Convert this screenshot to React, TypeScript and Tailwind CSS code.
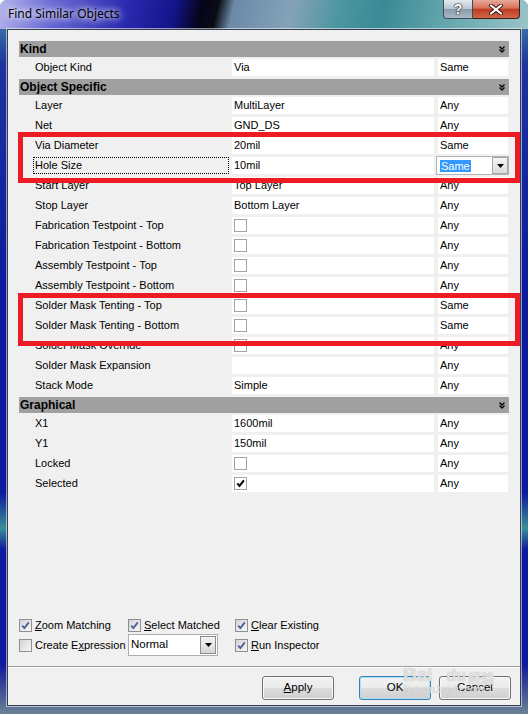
const sans = "font-['Liberation_Sans',Arial,sans-serif]";

type Val = string | { check: boolean };
type Row = { label: string; value: Val; match: string; focus?: boolean; combo?: boolean };

const sections: { title: string; rows: Row[] }[] = [
  { title: "Kind", rows: [{ label: "Object Kind", value: "Via", match: "Same" }] },
  {
    title: "Object Specific",
    rows: [
      { label: "Layer", value: "MultiLayer", match: "Any" },
      { label: "Net", value: "GND_DS", match: "Any" },
      { label: "Via Diameter", value: "20mil", match: "Same" },
      { label: "Hole Size", value: "10mil", match: "Same", focus: true, combo: true },
      { label: "Start Layer", value: "Top Layer", match: "Any" },
      { label: "Stop Layer", value: "Bottom Layer", match: "Any" },
      { label: "Fabrication Testpoint - Top", value: { check: false }, match: "Any" },
      { label: "Fabrication Testpoint - Bottom", value: { check: false }, match: "Any" },
      { label: "Assembly Testpoint - Top", value: { check: false }, match: "Any" },
      { label: "Assembly Testpoint - Bottom", value: { check: false }, match: "Any" },
      { label: "Solder Mask Tenting - Top", value: { check: false }, match: "Same" },
      { label: "Solder Mask Tenting - Bottom", value: { check: false }, match: "Same" },
      { label: "Solder Mask Override", value: { check: false }, match: "Any" },
      { label: "Solder Mask Expansion", value: "", match: "Any" },
      { label: "Stack Mode", value: "Simple", match: "Any" },
    ],
  },
  {
    title: "Graphical",
    rows: [
      { label: "X1", value: "1600mil", match: "Any" },
      { label: "Y1", value: "150mil", match: "Any" },
      { label: "Locked", value: { check: false }, match: "Any" },
      { label: "Selected", value: { check: true }, match: "Any" },
    ],
  },
];

const Chevrons = () => (
  <svg width="6" height="7" viewBox="0 0 6 7">
    <path d="M0.5 0.5 L3 3 L5.5 0.5 M0.5 3.5 L3 6 L5.5 3.5" stroke="#000" strokeWidth="1.3" fill="none" />
  </svg>
);

const DownTri = () => (
  <svg width="7" height="4" viewBox="0 0 7 4">
    <path d="M0 0h7L3.5 4z" fill="#000" />
  </svg>
);

const CellCheck = ({ on }: { on: boolean }) => (
  <span className="mt-[2px] flex h-[13px] w-[13px] items-center justify-center border border-[#a3a3a3] bg-white">
    {on && (
      <svg width="9" height="9" viewBox="0 0 9 9">
        <path d="M1.3 4.3 L3.5 6.9 L7.9 1.4" stroke="#000" strokeWidth="2" fill="none" />
      </svg>
    )}
  </span>
);

const GridRow = ({ r }: { r: Row }) => (
  <div className="flex h-[17px] text-[11px] leading-[17px] text-black">
    {r.focus ? (
      <div className="w-[213px] shrink-0 pl-[14px] pr-[3px]">
        <div className="h-full border border-dotted border-black pl-[1px] leading-[15px]">{r.label}</div>
      </div>
    ) : (
      <div className="w-[213px] shrink-0 pl-[16px] whitespace-nowrap">{r.label}</div>
    )}
    <div className="w-[202px] shrink-0 overflow-hidden bg-white pl-[2px] whitespace-nowrap">
      {typeof r.value === "string" ? r.value : <CellCheck on={r.value.check} />}
    </div>
    {r.combo ? (
      <div className="-mt-[1px] ml-[2px] flex h-[19px] w-[73px] shrink-0 items-center border border-[#b4b4b4] bg-white">
        <span className="ml-[3px] h-[12px] bg-[#3399ff] px-[1px] leading-[12px] text-white">{r.match}</span>
        <span className="ml-auto flex h-[17px] w-[16px] items-center justify-center border border-[#a6a6a6] bg-[linear-gradient(180deg,#f4f4f4,#dcdcdc)]">
          <DownTri />
        </span>
      </div>
    ) : (
      <div className="ml-[4px] w-[70px] shrink-0 bg-white pl-[2px]">{r.match}</div>
    )}
  </div>
);

const WinCheck = ({ on }: { on: boolean }) => (
  <span className="flex h-[13px] w-[13px] shrink-0 items-center justify-center border border-[#8e8f8f] bg-white">
    <span className="flex h-[11px] w-[11px] items-center justify-center bg-[linear-gradient(135deg,#d2d4d8,#f6f6f6)]">
      {on && (
        <svg width="9" height="9" viewBox="0 0 9 9">
          <path d="M1.2 4.6 L3.4 7 L7.8 1.4" stroke="#4a5f97" strokeWidth="1.8" fill="none" />
        </svg>
      )}
    </span>
  </span>
);

const Opt = ({ on, children }: { on: boolean; children: React.ReactNode }) => (
  <div className="flex items-center">
    <WinCheck on={on} />
    <span className="ml-[3px] whitespace-nowrap text-[11px] text-black">{children}</span>
  </div>
);

const Btn = ({ children, def }: { children: React.ReactNode; def?: boolean }) => (
  <div
    className={
      "flex h-[24px] w-[72px] items-center justify-center rounded-[3px] border text-[11.5px] text-black bg-[linear-gradient(180deg,#f2f2f2_0%,#ebebeb_50%,#dddddd_51%,#cfcfcf_100%)] " +
      (def
        ? "border-[#3c7fb1] shadow-[inset_0_0_0_1px_#a8e4f8]"
        : "border-[#707070] shadow-[inset_0_0_0_1px_#fafafa]")
    }
  >
    {children}
  </div>
);

export default function App() {
  return (
    <div className={"relative flex h-[714px] w-[528px] flex-col overflow-hidden rounded-t-[7px] bg-[linear-gradient(180deg,#4a98a6_0%,#1c34a0_9%,#0e1a9c_40%,#0e1a9c_69%,#3a8e98_74%,#0e1a9c_77%,#0e1a9c_93%,#6c8294_100%)] " + sans}>
      {/* title bar */}
      <div className="flex h-[29px] shrink-0 items-start bg-[linear-gradient(103deg,#b4b4ec_0%,#6a6ad4_10%,#2a2ab0_24%,#14148a_33%,#05051c_38%,#0a0c14_41%,#6c8aa8_44%,#84a2b8_55%,#4c96a0_64%,#3a8a96_72%,#6aaab0_86%,#9ac4c8_100%)]">
        <span className="ml-[8px] mt-[6px] font-['Noto_Sans',sans-serif] text-[12px] leading-[16px] text-black [text-shadow:0_0_6px_#fff,0_0_10px_#fff]">
          Find Similar Objects
        </span>
        <div className="ml-auto mr-[8px] flex">
          <div className="flex h-[19px] w-[30px] items-center justify-center rounded-bl-[4px] border border-t-0 border-[#3c4c5c] bg-[linear-gradient(180deg,#e4eaf0_0%,#b8c4d0_50%,#8c9cac_51%,#a8b8c4_100%)]">
            <span className="text-[14px] font-bold leading-none text-white [text-shadow:0_0_1px_#1a1a1a,0_0_1px_#1a1a1a,0_0_2px_#333]">?</span>
          </div>
          <div className="flex h-[19px] w-[47px] items-center justify-center rounded-br-[4px] border border-l-0 border-t-0 border-[#3c2020] bg-[linear-gradient(180deg,#e8a898_0%,#d8705a_45%,#c03c20_52%,#d06848_100%)]">
            <svg width="14" height="11" viewBox="0 0 14 11">
              <path d="M2 1.5 L12 9.5 M12 1.5 L2 9.5" stroke="#3a1a14" strokeWidth="4" strokeLinecap="round" />
              <path d="M2 1.5 L12 9.5 M12 1.5 L2 9.5" stroke="#fff" strokeWidth="2.2" strokeLinecap="round" />
            </svg>
          </div>
        </div>
      </div>

      {/* frame + client */}
      <div className="flex flex-1 px-[7px] pb-[8px]">
        <div className="flex flex-1 flex-col border border-[#34404e] bg-[#f0f0f0] shadow-[0_0_0_1px_rgba(255,255,255,0.55)]">
          <div className="box-content flex w-[490px] flex-col gap-[3px] pl-[11px] pt-[11px]">
            {sections.map((s) => (
              <div key={s.title} className="flex flex-col">
                <div className="mb-[2px] flex h-[16px] items-center bg-[#a0a0a0] pl-[1px] pr-[4px]">
                  <span className="text-[12px] font-bold leading-[16px] text-black">{s.title}</span>
                  <span className="ml-auto">
                    <Chevrons />
                  </span>
                </div>
                <div className="flex flex-col gap-[3px]">
                  {s.rows.map((r) => (
                    <GridRow key={r.label} r={r} />
                  ))}
                </div>
              </div>
            ))}
          </div>

          {/* options */}
          <div className="mt-auto flex flex-col pl-[11px]">
            <div className="flex h-[16px] items-center">
              <div className="w-[109px]">
                <Opt on>
                  <u>Z</u>oom Matching
                </Opt>
              </div>
              <div className="w-[107px]">
                <Opt on>
                  <u>S</u>elect Matched
                </Opt>
              </div>
              <Opt on>
                <u>C</u>lear Existing
              </Opt>
            </div>
            <div className="mt-[1px] flex h-[22px] items-center">
              <div className="w-[109px]">
                <Opt on={false}>
                  Create E<u>x</u>pression
                </Opt>
              </div>
              <div className="w-[107px]">
                <div className="flex h-[22px] w-[90px] items-start border border-[#adadad] bg-white">
                  <span className="ml-[2px] mt-[3px] text-[11.5px] leading-[13px] text-black">Normal</span>
                  <span className="ml-auto mr-[1px] mt-[1px] flex h-[18px] w-[16px] items-center justify-center border border-[#8a8a8a] bg-[linear-gradient(180deg,#f4f4f4,#d6d6d6)]">
                    <DownTri />
                  </span>
                </div>
              </div>
              <Opt on>
                <u>R</u>un Inspector
              </Opt>
            </div>
          </div>

          <div className="mt-[10px] h-[2px] border-t border-[#a0a0a0] bg-white" />

          <div className="flex justify-end pb-[5px] pr-[9px] pt-[8px]">
            <Btn>
              <u>A</u>pply
            </Btn>
            <div className="ml-[25px]">
              <Btn def>OK</Btn>
            </div>
            <div className="ml-[8px]">
              <Btn>Cancel</Btn>
            </div>
          </div>
        </div>
      </div>

      {/* annotation boxes */}
      <div className="absolute left-[18px] top-[132px] h-[51px] w-[502px] border-[5px] border-[#ed1c24]" />
      <div className="absolute left-[18px] top-[293px] h-[53px] w-[502px] border-[5px] border-[#ed1c24]" />

      {/* watermark */}
      <div className="pointer-events-none absolute left-[403px] top-[666px] flex flex-col text-white/70 [text-shadow:0_0_1px_#9a9a9a]">
        <div className="flex h-[18px] items-end leading-none">
          <span className="text-[19px] font-bold">Bai</span>
          <span className="ml-[14px] text-[16px] font-bold">du</span>
          <span className="ml-[2px] font-['Noto_Sans_CJK_SC',sans-serif] text-[13px] font-bold">经验</span>
        </div>
        <span className="text-[10px] leading-[12px]">jingyan.baidu.com</span>
      </div>
    </div>
  );
}
